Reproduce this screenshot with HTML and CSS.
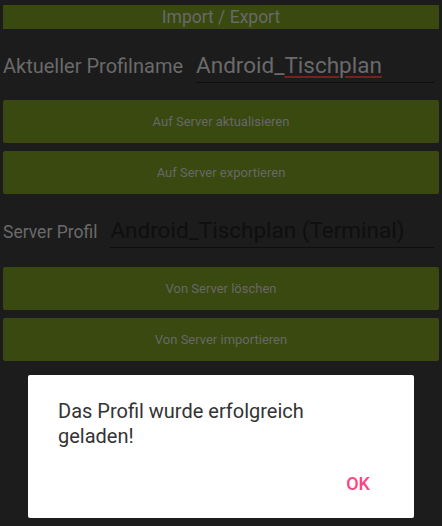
FILE: index.html
```html
<!DOCTYPE html>
<html lang="de">
<head>
  <meta charset="UTF-8">
  <meta name="viewport" content="width=device-width, initial-scale=1.0">
  <title>Import / Export</title>
  <link rel="stylesheet" href="styles.css">
</head>
<body>
  <div class="screen">
    <div class="title-bar">Import / Export</div>

    <div class="field-row first">
      <span class="field-label">Aktueller Profilname</span>
      <div class="field-input light">Android_<span class="misspelled">Tischplan</span></div>
    </div>

    <button class="action">Auf Server aktualisieren</button>
    <button class="action">Auf Server exportieren</button>

    <div class="field-row second">
      <span class="field-label small">Server Profil</span>
      <div class="field-input dark">Android_Tischplan (Terminal)</div>
    </div>

    <button class="action">Von Server löschen</button>
    <button class="action">Von Server importieren</button>
  </div>

  <div class="dialog">
    <p class="dialog-message">Das Profil wurde erfolgreich geladen!</p>
    <div class="dialog-actions">
      <button class="dialog-ok">OK</button>
    </div>
  </div>
</body>
</html>
```

FILE: styles.css
```css
body {
  margin: 0;
  height: 526px;
  background-color: #1c1c1c;
  font-family: Roboto, "Liberation Sans", sans-serif;
  overflow: hidden;
  position: relative;
}
.screen {
  padding: 5px 3px 0 3px;
  display: flex;
  flex-direction: column;
}
.title-bar {
  height: 24px;
  line-height: 24px;
  background-color: #3a4910;
  color: #686868;
  font-size: 17.5px;
  text-align: center;
}
.field-row {
  display: flex;
  align-items: baseline;
  gap: 13px;
  padding-top: 19px;
  margin-bottom: 17px;
}
.field-row.second {
  padding-top: 11px;
  margin-bottom: 19px;
}
.field-label {
  font-size: 20px;
  color: #6a6a6a;
  white-space: nowrap;
}
.field-label.small {
  font-size: 17.5px;
}
.field-input {
  flex: 1;
  margin-right: 5px;
  height: 34px;
  line-height: 34px;
  font-size: 22.5px;
  border-bottom: 1px solid #0e0e0e;
  white-space: nowrap;
}
.field-input.light {
  color: #6a6a6a;
}
.field-input.dark {
  color: #0f0f0f;
}
.misspelled {
  text-decoration: underline;
  text-decoration-color: #7a1e1e;
  text-decoration-thickness: 2px;
  text-underline-offset: 3px;
}
.action {
  height: 43px;
  margin-bottom: 8px;
  border: none;
  border-radius: 2px;
  background-color: #3a4910;
  color: #676767;
  font-family: Roboto, "Liberation Sans", sans-serif;
  font-size: 13px;
}
.dialog {
  position: absolute;
  left: 28px;
  top: 375px;
  width: 386px;
  height: 143px;
  box-sizing: border-box;
  background-color: #fff;
  border-radius: 2px;
  padding: 24px 30px 0 30px;
}
.dialog-message {
  margin: 0;
  font-size: 20px;
  line-height: 25px;
  color: #333;
}
.dialog-actions {
  display: flex;
  justify-content: flex-end;
  margin-top: 24px;
}
.dialog-ok {
  border: none;
  background: none;
  padding: 0;
  margin-right: 14px;
  color: #ff4081;
  font-family: Roboto, "Liberation Sans", sans-serif;
  font-size: 18px;
  font-weight: 500;
}
```
